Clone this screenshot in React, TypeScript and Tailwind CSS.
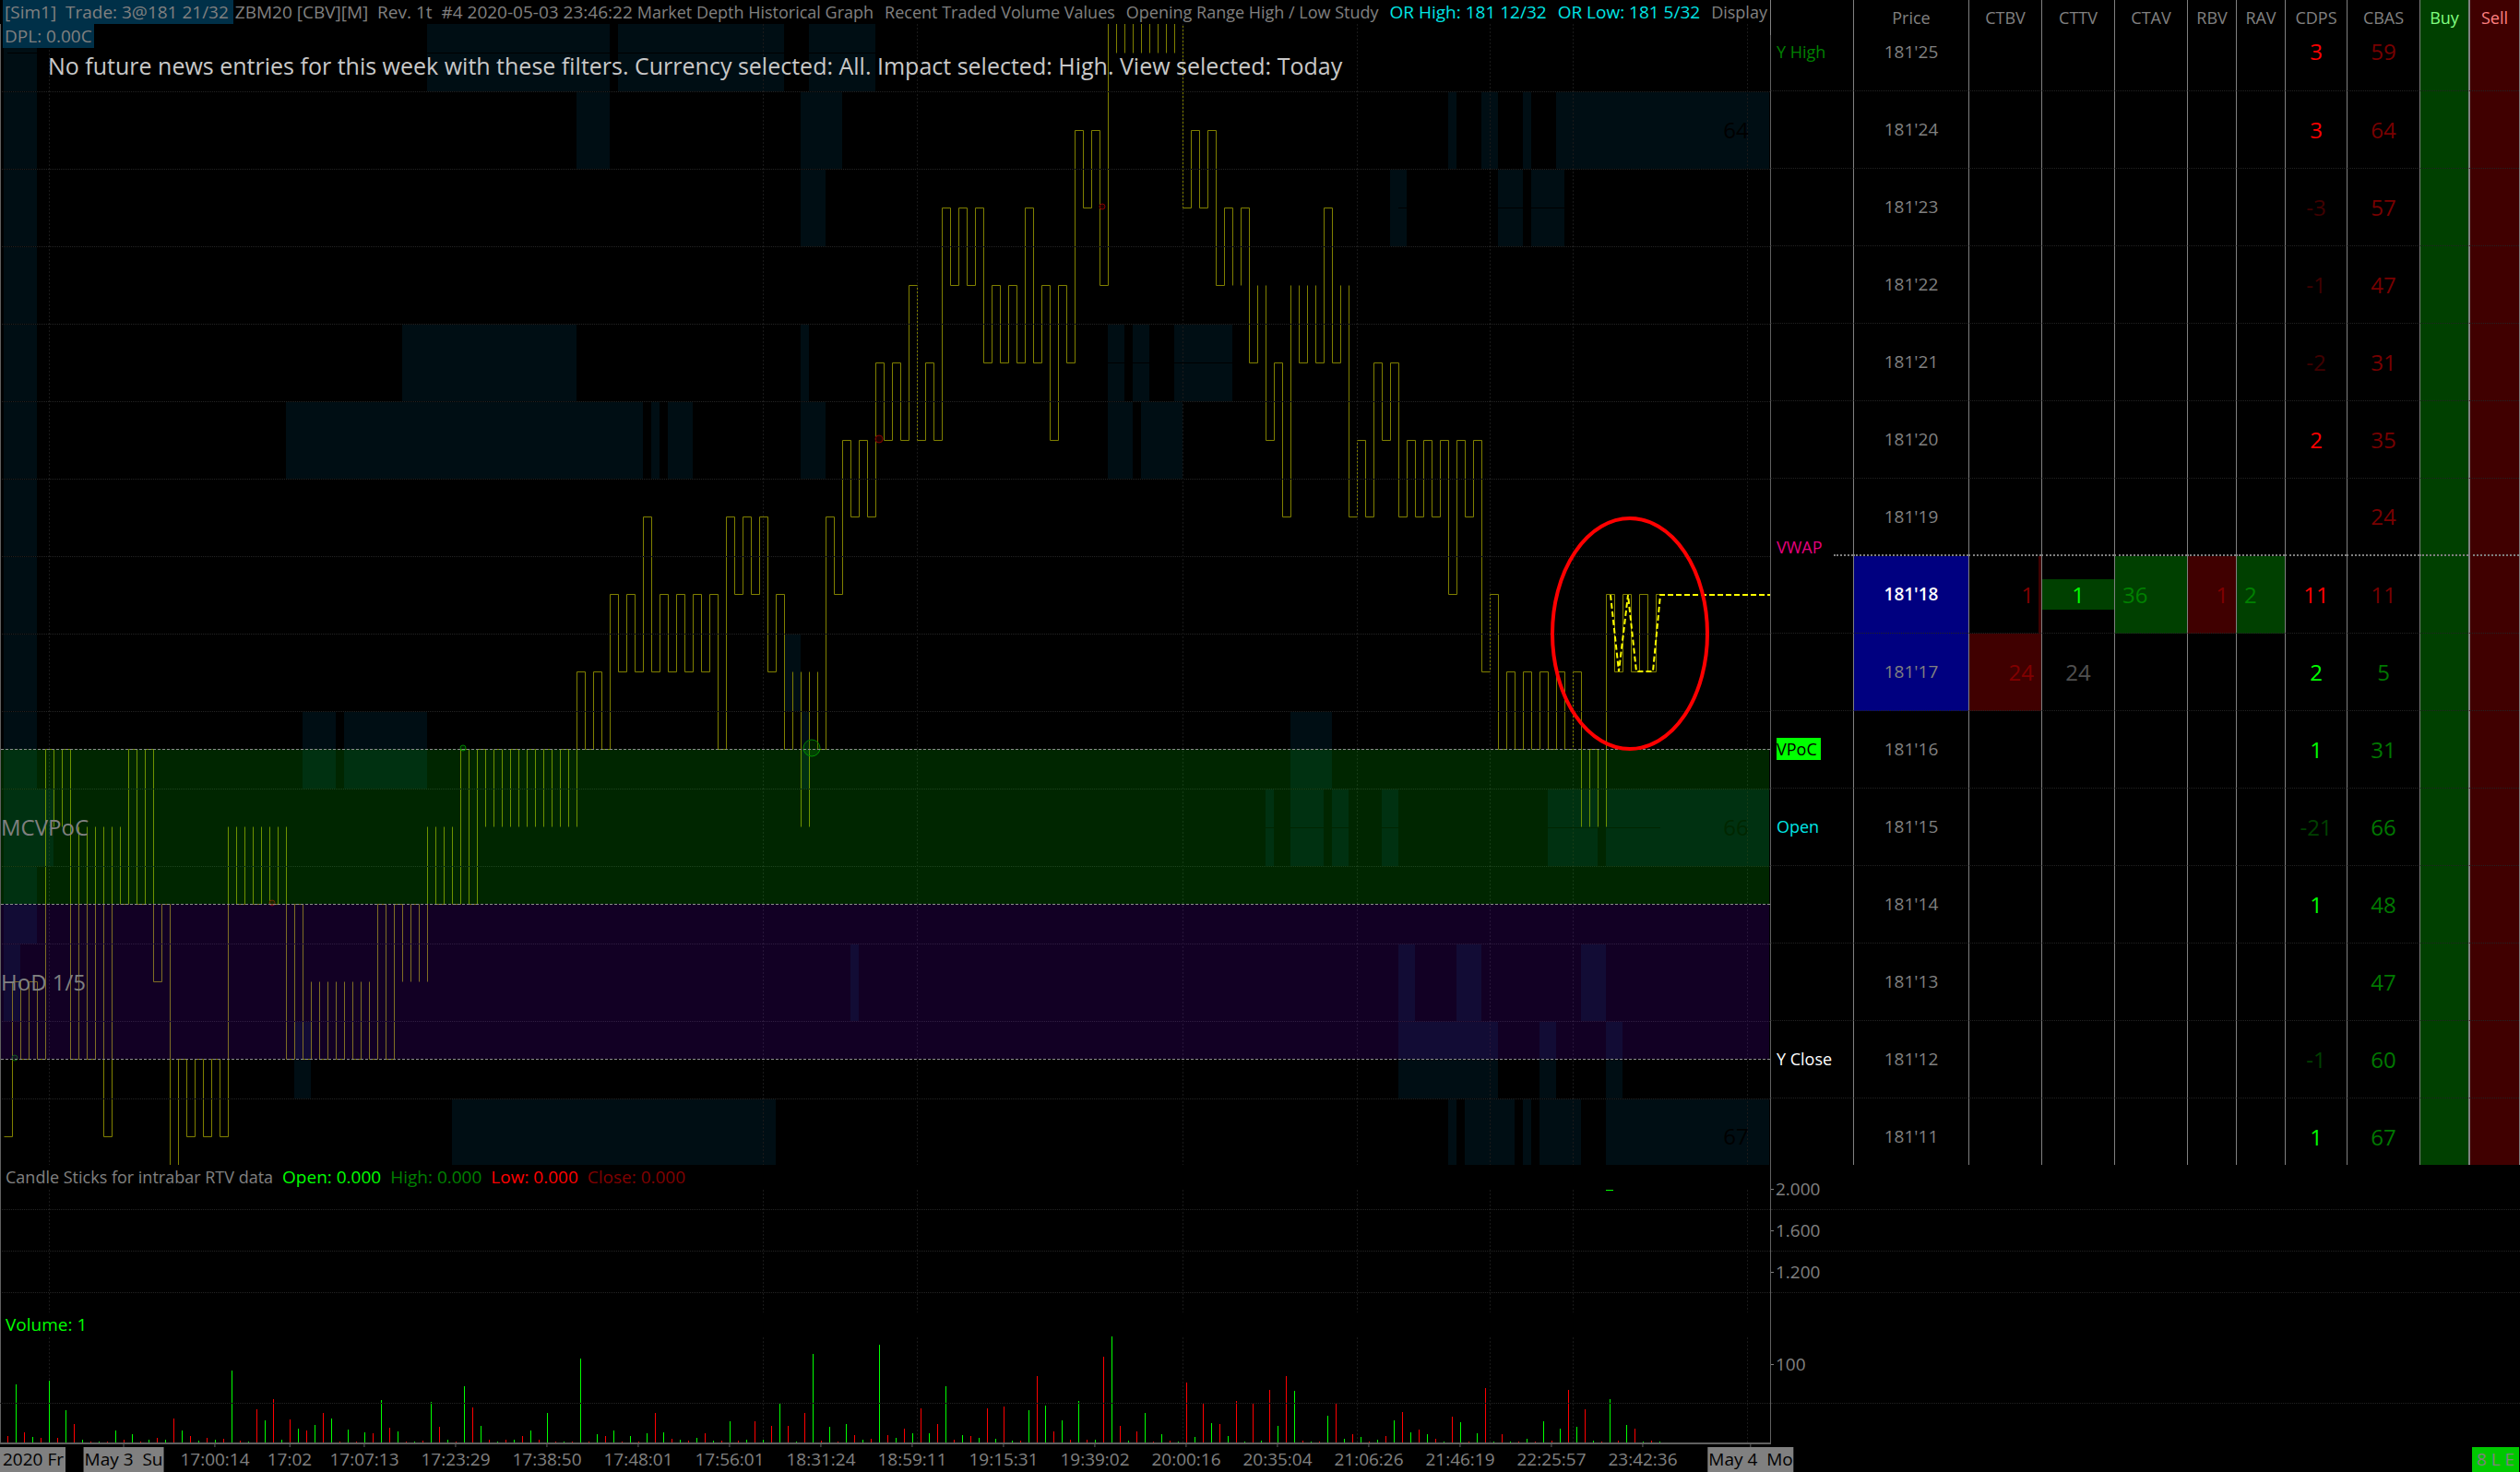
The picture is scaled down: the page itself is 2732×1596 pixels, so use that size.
import React from 'react';
import { clsx } from 'clsx';

type Span = [number, number];

const STEP = 9;
const LEFT = 4;
const PLOT_WIDTH = 1919;

const colX = (k: number) => Math.min(LEFT + k * STEP, PLOT_WIDTH - 1);
const priceY = (p: number) => Math.floor(57.4 + 83.93 * (25 - p)) + 0.5;
const rowTop = (p: number) => Math.max(26, 15 + 84 * (25 - p));

// traded price (32nds above 181) held during each bar
const levels: number[] = [
  11, 13, 12, 13, 12, 16, 15, 16, 12, 15, 12, 15, 11, 15, 14, 16, 14, 16, 13, 14,
  10, 12, 11, 12, 11, 12, 11, 15, 14, 15, 14, 15, 14, 15, 12, 14, 12, 13, 12, 13,
  12, 13, 12, 13, 12, 14, 12, 14, 13, 14, 13, 15, 14, 15, 14, 16, 14, 16, 15, 16,
  15, 16, 15, 16, 15, 16, 15, 16, 15, 17, 16, 17, 16, 18, 17, 18, 17, 19, 17, 18,
  17, 18, 17, 18, 17, 18, 16, 19, 18, 19, 18, 19, 17, 18, 16, 17, 15, 17, 16, 19,
  18, 20, 19, 20, 19, 21, 20, 21, 20, 22, 20, 21, 20, 23, 22, 23, 22, 23, 21, 22,
  21, 22, 21, 23, 21, 22, 20, 22, 21, 24, 23, 24, 22, 26, 25, 26, 25, 26, 25, 26,
  25, 26, 23, 24, 23, 24, 22, 23, 22, 23, 21, 22, 20, 21, 19, 22, 21, 22, 21, 23,
  21, 22, 19, 20, 19, 21, 20, 21, 19, 20, 19, 20, 19, 20, 18, 20, 19, 20, 17, 18,
  16, 17, 16, 17, 16, 17, 16, 17, 16, 17, 15, 16, 15, 18, 17, 18, 17, 18, 17, 18,
];

// bars whose flat part is covered by another study
const isCovered = (k: number) => {
  const p = levels[k];
  if (p === 15 || p === 25) return true;
  if (p === 13 && k >= 37) return true;
  if (p === 22 && k >= 148) return true;
  return p === 17 && (k === 95 || k === 97);
};

const pricePath = levels
  .map((p, k) => {
    const x = colX(k) + 0.5;
    const y = priceY(p);
    const end = k === levels.length - 1 ? x + 6 : x + STEP;
    const start = k === 0 ? `M${x} ${y}` : `V${y}`;
    return `${start}${isCovered(k) ? 'M' : 'L'}${end} ${y}`;
  })
  .join('');

const END = 213;

const depth: { price: number; spans: Span[] }[] = [
  { price: 25, spans: [[0, 4], [51, 73], [74, 94], [97, 105]] },
  { price: 24, spans: [[0, 4], [69, 73], [96, 101], [174, 175], [178, 180], [183, 184], [187, END]] },
  { price: 23, spans: [[0, 4], [96, 99], [167, 169], [180, 183], [184, 188]] },
  { price: 22, spans: [[0, 4]] },
  { price: 21, spans: [[0, 4], [48, 69], [96, 97], [133, 135], [136, 138], [141, 148]] },
  { price: 20, spans: [[0, 4], [34, 77], [78, 79], [80, 83], [96, 99], [133, 136], [137, 142]] },
  { price: 19, spans: [[0, 4]] },
  { price: 18, spans: [[0, 4]] },
  { price: 17, spans: [[0, 4], [94, 96]] },
  { price: 16, spans: [[0, 4], [36, 40], [41, 51], [96, 97], [155, 160]] },
  { price: 15, spans: [[0, 6], [152, 153], [155, 159], [160, 162], [166, 168], [186, 192], [193, END]] },
  { price: 14, spans: [[0, 4]] },
  { price: 13, spans: [[0, 2], [102, 103], [168, 170], [175, 178], [190, 193]] },
  { price: 12, spans: [[35, 37], [168, 180], [185, 187], [193, 195]] },
  { price: 11, spans: [[54, 93], [174, 175], [176, 182], [183, 184], [185, 190], [193, END]] },
];

// bar heights in px, up (odd) and down (even) ticks alternate
const volumes: number[] = [
  7, 63, 11, 6, 5, 67, 5, 35, 20, 3, 1, 1, 1, 13, 3, 9, 1, 3, 5, 3,
  26, 13, 7, 2, 5, 3, 4, 78, 2, 1, 36, 24, 47, 3, 25, 15, 13, 19, 32, 26,
  1, 14, 1, 11, 10, 46, 16, 12, 1, 1, 2, 44, 17, 3, 1, 61, 38, 18, 3, 1,
  3, 3, 7, 13, 3, 32, 1, 1, 1, 91, 1, 9, 7, 13, 1, 7, 1, 10, 32, 11,
  4, 3, 2, 5, 10, 2, 2, 23, 2, 3, 23, 3, 18, 42, 18, 1, 32, 96, 2, 17,
  1, 20, 8, 3, 4, 106, 8, 5, 15, 10, 37, 10, 20, 61, 3, 8, 7, 5, 37, 4,
  39, 2, 2, 35, 72, 40, 12, 24, 3, 45, 3, 3, 93, 115, 18, 2, 12, 32, 1, 9,
  2, 1, 65, 6, 43, 21, 20, 7, 45, 1, 43, 2, 57, 18, 72, 56, 2, 1, 1, 29,
  43, 4, 9, 6, 1, 3, 7, 24, 33, 11, 14, 9, 4, 1, 28, 22, 1, 10, 59, 1,
  9, 1, 1, 4, 1, 23, 2, 15, 57, 17, 36, 2, 1, 47, 2, 19, 15, 1, 2, 1,
];

const sessionLines = [53, 827, 994, 1282, 1471, 1615, 1705, 1894];

const circles = [
  { x: 16, y: 1147, r: 3, color: '#006000' },
  { x: 295, y: 979, r: 3, color: '#800000' },
  { x: 502, y: 811, r: 3, color: '#008000' },
  { x: 880, y: 811, r: 9, color: '#008000' },
  { x: 953, y: 476, r: 4, color: '#800000' },
  { x: 1195, y: 224, r: 3, color: '#800000' },
];

interface LadderRow {
  price: number;
  study?: string;
  cdps?: number;
  cdpsClass?: string;
  cbas: number;
}

const RED = 'text-[#ff0000]';
const DIM_RED = 'text-[#400000]';
const GREEN = 'text-[#00ff00]';
const DIM_GREEN = 'text-[#004000]';

const ladder: LadderRow[] = [
  { price: 25, study: 'Y High', cdps: 3, cdpsClass: RED, cbas: 59 },
  { price: 24, cdps: 3, cdpsClass: RED, cbas: 64 },
  { price: 23, cdps: -3, cdpsClass: DIM_RED, cbas: 57 },
  { price: 22, cdps: -1, cdpsClass: DIM_RED, cbas: 47 },
  { price: 21, cdps: -2, cdpsClass: DIM_RED, cbas: 31 },
  { price: 20, cdps: 2, cdpsClass: RED, cbas: 35 },
  { price: 19, study: 'VWAP', cbas: 24 },
  { price: 18, cdps: 11, cdpsClass: RED, cbas: 11 },
  { price: 17, cdps: 2, cdpsClass: GREEN, cbas: 5 },
  { price: 16, study: 'VPoC', cdps: 1, cdpsClass: GREEN, cbas: 31 },
  { price: 15, study: 'Open', cdps: -21, cdpsClass: DIM_GREEN, cbas: 66 },
  { price: 14, cdps: 1, cdpsClass: GREEN, cbas: 48 },
  { price: 13, cbas: 47 },
  { price: 12, study: 'Y Close', cdps: -1, cdpsClass: DIM_GREEN, cbas: 60 },
  { price: 11, cdps: 1, cdpsClass: GREEN, cbas: 67 },
];

const studyClass: Record<string, string> = {
  'Y High': 'text-[#008000]',
  VWAP: 'text-[#e6007e]',
  VPoC: 'bg-[#00ff00] text-black pr-1',
  Open: 'text-[#00e5e5]',
  'Y Close': 'text-white',
};

const timeLabels = [
  { bar: 14, text: 'May 3  Su', day: true },
  { bar: 25, text: '17:00:14' },
  { bar: 34, text: '17:02' },
  { bar: 43, text: '17:07:13' },
  { bar: 54, text: '17:23:29' },
  { bar: 65, text: '17:38:50' },
  { bar: 76, text: '17:48:01' },
  { bar: 87, text: '17:56:01' },
  { bar: 98, text: '18:31:24' },
  { bar: 109, text: '18:59:11' },
  { bar: 120, text: '19:15:31' },
  { bar: 131, text: '19:39:02' },
  { bar: 142, text: '20:00:16' },
  { bar: 153, text: '20:35:04' },
  { bar: 164, text: '21:06:26' },
  { bar: 175, text: '21:46:19' },
  { bar: 186, text: '22:25:57' },
  { bar: 197, text: '23:42:36' },
  { bar: 210, text: 'May 4  Mo', day: true },
];

const SessionGrid: React.FC<{ y1: number; y2: number }> = ({ y1, y2 }) => (
  <g stroke="#1a1a1a" strokeDasharray="2 2">
    {sessionLines.map(x => (
      <line key={x} x1={x + 0.5} x2={x + 0.5} y1={y1} y2={y2} />
    ))}
  </g>
);

const PriceChart: React.FC = () => (
  <svg
    viewBox="0 26 1919 1237"
    preserveAspectRatio="none"
    className="block w-full h-[1237px]"
    fontFamily='"Open Sans", "Noto Sans", sans-serif'
    fontSize={24}
  >
    {depth.map(({ price, spans }) =>
      spans.map(([a, b]) => (
        <rect
          key={`${price}-${a}`}
          x={colX(a)}
          y={rowTop(price)}
          width={colX(b) - colX(a)}
          height={rowTop(price - 1) - rowTop(price)}
          fill="#000e14"
        />
      ))
    )}
    <g stroke="#000">
      <line x1="8" x2="960" y1="57.5" y2="57.5" />
      <line x1="1516" x2="1700" y1="225.5" y2="225.5" />
      <line x1="1201" x2="1340" y1="393.5" y2="393.5" />
      <line x1="1370" x2="1800" y1="897.5" y2="897.5" />
    </g>

    <g fill="#000" textAnchor="middle">
      <text x="1882" y="150">64</text>
      <text x="1882" y="906">66</text>
      <text x="1882" y="1241">67</text>
    </g>

    <path d={pricePath} fill="none" stroke="#808000" />

    {ladder.slice(0, -1).map(({ price }) => {
      const y = rowTop(price - 1) + 0.5;
      return (
        <g key={price}>
          <line x1="0" x2="1919" y1={y} y2={y} stroke="#000" />
          <line x1="0" x2="1919" y1={y} y2={y} stroke="#242424" strokeDasharray="1 1" />
        </g>
      );
    })}
    <SessionGrid y1={26} y2={1263} />

    {circles.map(c => (
      <circle key={c.x} cx={c.x} cy={c.y} r={c.r} fill={c.color} fillOpacity="0.25" stroke={c.color} />
    ))}

    {/* value areas */}
    <rect x="0" y="812" width="1918" height="168" fill="#00ff00" fillOpacity="0.15" />
    <rect x="0" y="980" width="1918" height="168" fill="#8000ff" fillOpacity="0.14" />
    <g stroke="#8c8c8c" strokeDasharray="3 2">
      <line x1="1" x2="1919" y1="812.5" y2="812.5" />
      <line x1="1" x2="1919" y1="980.5" y2="980.5" />
      <line x1="1" x2="1919" y1="1148.5" y2="1148.5" />
    </g>

    <g fill="#808080">
      <text x="1" y="906">MCVPoC</text>
      <text x="1" y="1074">HoD 1/5</text>
    </g>

    {/* marked orders */}
    <path
      d="M1746 645L1755 728L1765 645L1774 728H1792L1800 645H1919"
      fill="none"
      stroke="#ffff00"
      strokeWidth="2"
      strokeDasharray="6 3"
    />
    <ellipse cx="1767" cy="687" rx="84" ry="125" fill="none" stroke="#ff0000" strokeWidth="4" />
    <line x1="0.5" x2="0.5" y1="0" y2="1263" stroke="#606060" />
  </svg>
);

const chartHeader = 'flex items-center h-[27px] whitespace-pre overflow-hidden';

const ChartTitle: React.FC = () => (
  <div className="flex h-[26px] items-center gap-3 overflow-hidden whitespace-pre text-[18px] leading-[26px]">
    <div className="ml-[3px] flex shrink-0">
      <span className="bg-[#003048] px-[2px] pr-[5px] text-[19px]">[Sim1]  Trade: 3@181 21/32</span>
      <span className="pl-[2px] text-[19px]">ZBM20 [CBV][M]  Rev. 1t  #4 2020-05-03 23:46:22 </span>
      <span>Market Depth Historical Graph</span>
    </div>
    <span>Recent Traded Volume Values</span>
    <span>Opening Range High / Low Study</span>
    <span className="text-[19px] text-[#00e5e5]">OR High: 181 12/32</span>
    <span className="text-[19px] text-[#00e5e5]">OR Low: 181 5/32</span>
    <span>Display</span>
  </div>
);

const cell = 'border-l border-l-[#808080] p-0 font-normal';
const gridBottom = 'border-b border-dotted border-b-[#222222]';

const Ladder: React.FC = () => (
  <table className="w-[813px] shrink-0 table-fixed border-separate border-spacing-0 border-r border-r-[#808080] text-center">
    <colgroup>
      <col className="w-[90px]" />
      <col className="w-[125px]" />
      <col className="w-[79px]" />
      <col className="w-[79px]" />
      <col className="w-[79px]" />
      <col className="w-[53px]" />
      <col className="w-[53px]" />
      <col className="w-[67px]" />
      <col className="w-[79px]" />
      <col className="w-[53px]" />
      <col className="w-[55px]" />
    </colgroup>
    <thead>
      <tr className="h-[38px] text-[18px]">
        <th className={cell} />
        {['Price', 'CTBV', 'CTTV', 'CTAV', 'RBV', 'RAV', 'CDPS', 'CBAS'].map(name => (
          <th key={name} className={cell}>{name}</th>
        ))}
        <th className={clsx(cell, 'bg-[#004000] text-[#80ff80]')}>Buy</th>
        <th className="border-l-2 border-l-[#808080] bg-[#400000] p-0 font-normal text-[#ff8080]">Sell</th>
      </tr>
    </thead>
    <tbody>
      {ladder.map(({ price, study, cdps, cdpsClass, cbas }, i) => {
        const first = i === 0;
        const last = i === ladder.length - 1;
        const current = price === 18;
        const line = last
          ? ''
          : price === 19
            ? 'border-b-2 border-dotted border-b-[#808080]'
            : gridBottom;
        const td = clsx('border-l border-l-[#808080] [border-left-style:solid]', line);
        const num = 'text-2xl leading-9';
        return (
          <tr
            key={price}
            className={clsx(
              first && 'h-[61px] align-top leading-9',
              last && 'h-[72px] align-bottom',
              !first && !last && 'h-[84px] align-middle'
            )}
          >
            <td
              className={clsx(
                'border-l border-l-[#606060] [border-left-style:solid] p-0 pl-[6px] text-left text-[18px]',
                last || price === 19 ? '' : gridBottom,
                price === 19 && 'align-bottom'
              )}
            >
              {study && price !== 19 && <span className={studyClass[study]}>{study}</span>}
              {study && price === 19 && (
                <div className="flex items-end justify-between leading-5">
                  <span className={studyClass[study]}>{study}</span>
                  <span className="w-[21px] border-b-2 border-dotted border-[#808080]" />
                </div>
              )}
            </td>
            <td
              className={clsx(
                td,
                'p-0',
                last && 'pb-[17px]',
                (current || price === 17) && 'bg-[#000080]',
                current && 'font-semibold text-white'
              )}
            >
              181'{price}
            </td>
            <td
              className={clsx(
                td,
                num,
                'p-0 pr-2 text-right text-[#800000]',
                current && 'bg-[linear-gradient(to_left,#400000_3px,transparent_3px)]',
                price === 17 && 'bg-[#400000]'
              )}
            >
              {current ? 1 : price === 17 ? 24 : ''}
            </td>
            <td className={clsx(td, num, 'p-0', current ? 'text-[#00ff00]' : 'text-[#505050]')}>
              {current && <div className="bg-[#004000] leading-[33px]">1</div>}
              {price === 17 && 24}
            </td>
            <td className={clsx(td, num, 'p-0 pl-2 text-left text-[#008000]', current && 'bg-[#004000]')}>
              {current && 36}
            </td>
            <td className={clsx(td, num, 'p-0 pr-2 text-right text-[#800000]', current && 'bg-[#400000]')}>
              {current && 1}
            </td>
            <td className={clsx(td, num, 'p-0 pl-2 text-left text-[#008000]', current && 'bg-[#004000]')}>
              {current && 2}
            </td>
            <td className={clsx(td, num, cdpsClass, 'p-0', last && 'pb-3')}>{cdps}</td>
            <td className={clsx(td, num, 'p-0', last && 'pb-3', price >= 18 ? 'text-[#780000]' : 'text-[#007800]')}>
              {cbas}
            </td>
            <td className={clsx(td, 'bg-[#004000] p-0')} />
            <td className={clsx(line, 'border-l-2 border-l-[#808080] [border-left-style:solid] bg-[#400000] p-0')} />
          </tr>
        );
      })}
    </tbody>
  </table>
);

const RtvPanel: React.FC = () => (
  <section className="flex h-[160px]">
    <div className="min-w-0 flex-1 border-l border-[#606060]">
      <div className={clsx(chartHeader, 'gap-[10px] pl-[5px]')}>
        <span className="text-[18px]">Candle Sticks for intrabar RTV data</span>
        <span className="text-[#00ff00]">Open: 0.000</span>
        <span className="text-[#008000]">High: 0.000</span>
        <span className="text-[#ff0000]">Low: 0.000</span>
        <span className="text-[#800000]">Close: 0.000</span>
      </div>
      <svg viewBox="1 1290 1918 133" preserveAspectRatio="none" className="block h-[133px] w-full">
        <SessionGrid y1={1290} y2={1423} />
        {[1311, 1356, 1401].map(y => (
          <line key={y} x1="0" x2="1919" y1={y + 0.5} y2={y + 0.5} stroke="#242424" strokeDasharray="1 1" />
        ))}
        <rect x="1741" y="1290" width="8" height="1" fill="#00ff00" />
      </svg>
    </div>
    <div className="w-[813px] shrink-0 border-l border-[#606060] pt-1">
      {['2.000', '1.600', '1.200'].map(value => (
        <div key={value} className="flex h-[45px] items-center gap-[2px] border-b border-dotted border-b-[#222222]">
          <span className="h-px w-[3px] bg-[#808080]" />
          {value}
        </div>
      ))}
    </div>
  </section>
);

const VolumePanel: React.FC = () => (
  <section className="flex h-[143px]">
    <div className="min-w-0 flex-1 border-b-2 border-l border-[#606060]">
      <div className={clsx(chartHeader, 'pl-[5px] text-[#00ff00]')}>Volume: 1</div>
      <svg viewBox="1 1450 1918 114" preserveAspectRatio="none" className="block h-[114px] w-full overflow-visible">
        <SessionGrid y1={1450} y2={1564} />
        {volumes.map((h, k) => (
          <rect key={k} x={8 + k * STEP} y={1564 - h} width="1" height={h} fill={k % 2 ? '#00ff00' : '#ff0000'} />
        ))}
        <line x1="0" x2="1919" y1="1521.5" y2="1521.5" stroke="#000" />
        <line x1="0" x2="1919" y1="1521.5" y2="1521.5" stroke="#242424" strokeDasharray="1 1" />
      </svg>
    </div>
    <div className="w-[813px] shrink-0 border-l border-[#606060]">
      <div className="flex h-[99px] items-center gap-[2px] border-b border-dotted border-b-[#222222] pt-[14px]">
        <span className="h-px w-[3px] bg-[#808080]" />
        100
      </div>
    </div>
  </section>
);

const TimeAxis: React.FC = () => (
  <footer className="flex h-[30px]">
    <div className="relative min-w-0 flex-1">
      <span className="absolute left-0 top-[3px] w-[71px] overflow-hidden whitespace-pre bg-[#808080] pl-[3px] leading-[27px] text-black">
        2020 Fr
      </span>
      {timeLabels.map(({ bar, text, day }) => (
        <div
          key={bar}
          className="absolute top-0 flex -translate-x-1/2 flex-col items-center whitespace-pre"
          style={{ left: `${((8 + bar * STEP) / PLOT_WIDTH) * 100}%` }}
        >
          <span className="h-[3px] w-px bg-[#606060]" />
          <span className={clsx('leading-[27px]', day && 'bg-[#808080] px-px text-black')}>{text}</span>
        </div>
      ))}
    </div>
    <div className="flex w-[813px] shrink-0 justify-end pt-[3px]">
      <span className="mr-px w-[51px] whitespace-pre bg-[#00c800] text-center leading-[27px] text-[#808080]">8 L E</span>
    </div>
  </footer>
);

const App: React.FC = () => {
  return (
    <main className="flex min-h-screen flex-col overflow-hidden bg-black font-['Open_Sans','Noto_Sans',sans-serif] text-[19px] font-normal text-[#808080]">
      <section className="flex">
        <div className="relative min-w-0 flex-1 overflow-hidden">
          <ChartTitle />
          <PriceChart />
          <span className="absolute left-[3px] top-[26px] bg-[#003048] px-[2px] leading-[26px]">DPL: 0.00C</span>
          <p className="absolute left-[52px] top-[53px] whitespace-nowrap text-[25px] leading-9 text-[#c8c8c8]">
            No future news entries for this week with these filters. Currency selected: All. Impact selected: High. View
            selected: Today
          </p>
        </div>
        <Ladder />
      </section>
      <RtvPanel />
      <VolumePanel />
      <TimeAxis />
    </main>
  );
};

export default App;
